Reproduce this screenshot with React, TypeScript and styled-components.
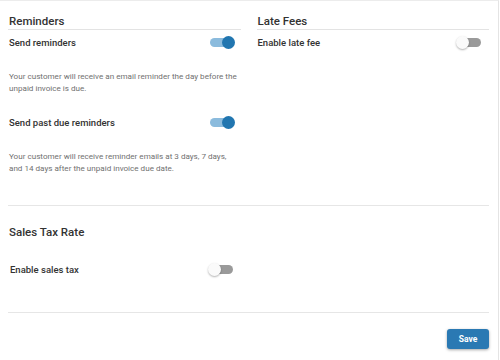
import styled, { createGlobalStyle } from "styled-components";

const GlobalStyle = createGlobalStyle`
  html, body {
    margin: 0;
    padding: 0;
    background: #ffffff;
    font-family: Roboto, "Liberation Sans", sans-serif;
  }
`

type ToggleProps = { on?: boolean }

function Toggle({ on }: ToggleProps) {
  return (
    <StyledToggle>
      <StyledTrack $on={on} />
      <StyledThumb $on={on} />
    </StyledToggle>
  )
}

function SettingRow({ label, on }: { label: string; on?: boolean }) {
  return (
    <StyledRow>
      <StyledLabel>{label}</StyledLabel>
      <Toggle on={on} />
    </StyledRow>
  )
}

function App() {
  return (
    <>
      <GlobalStyle />
      <StyledCard>
        <StyledColumns>
          <StyledColumn>
            <StyledHeading>Reminders</StyledHeading>
            <SettingRow label="Send reminders" on />
            <StyledHint>
              Your customer will receive an email reminder the day before the unpaid invoice is due.
            </StyledHint>
            <SettingRow label="Send past due reminders" on />
            <StyledHint>
              Your customer will receive reminder emails at 3 days, 7 days, and 14 days after the unpaid invoice due date.
            </StyledHint>
          </StyledColumn>
          <StyledColumn>
            <StyledHeading>Late Fees</StyledHeading>
            <SettingRow label="Enable late fee" />
          </StyledColumn>
        </StyledColumns>
        <StyledDivider />
        <StyledSection>
          <StyledSectionTitle>Sales Tax Rate</StyledSectionTitle>
          <StyledHalf>
            <SettingRow label="Enable sales tax" />
          </StyledHalf>
        </StyledSection>
        <StyledDivider />
        <StyledFooter>
          <StyledSaveButton type="button">Save</StyledSaveButton>
        </StyledFooter>
      </StyledCard>
    </>
  )
}

const StyledCard = styled.div`
  width: 499px;
  height: 360px;
  box-sizing: border-box;
  border-top: 1px solid #ececec;
  border-right: 1px solid #e4e4e4;
  padding: 0 9px 0 8px;
`

const StyledColumns = styled.div`
  display: grid;
  grid-template-columns: 1fr 1fr;
  column-gap: 16px;
`

const StyledColumn = styled.div`
  display: flex;
  flex-direction: column;
`

const StyledHeading = styled.div`
  font-size: 11.5px;
  line-height: 16px;
  font-weight: 500;
  color: #333333;
  padding: 12px 0 0 1px;
  border-bottom: 1px solid #e3e3e3;
`

const StyledRow = styled.div`
  display: flex;
  align-items: center;
  justify-content: space-between;
  height: 24px;
  padding-left: 1px;
  padding-right: 6px;
`

const StyledLabel = styled.span`
  font-size: 9.5px;
  font-weight: 500;
  color: #333333;
`

const StyledHint = styled.p`
  margin: 16px 0;
  padding-left: 1px;
  font-size: 8.1px;
  line-height: 12px;
  color: #707070;
`

const StyledToggle = styled.div`
  position: relative;
  width: 27px;
  height: 13px;
`

const StyledTrack = styled.div<{ $on?: boolean }>`
  position: absolute;
  left: 2px;
  right: 2px;
  top: 2px;
  height: 9px;
  border-radius: 5px;
  background: ${({ $on }) => ($on ? "#8bbbdd" : "#9a9a9a")};
`

const StyledThumb = styled.div<{ $on?: boolean }>`
  position: absolute;
  top: 0;
  ${({ $on }) => ($on ? "right: 0;" : "left: 0;")}
  width: 13px;
  height: 13px;
  border-radius: 50%;
  background: ${({ $on }) => ($on ? "#2176b0" : "#fafafa")};
  box-shadow: ${({ $on }) => ($on ? "none" : "0 1px 2px rgba(0, 0, 0, 0.3)")};
`

const StyledDivider = styled.div`
  height: 1px;
  background: #e6e6e6;
  margin-top: 15px;
`

const StyledSection = styled.div`
  padding: 18px 0 16px 1px;
`

const StyledSectionTitle = styled.div`
  font-size: 11.5px;
  line-height: 16px;
  font-weight: 500;
  color: #333333;
  margin-bottom: 17px;
`

const StyledHalf = styled.div`
  width: 232px;
`

const StyledFooter = styled.div`
  display: flex;
  justify-content: flex-end;
  padding-top: 16px;
`

const StyledSaveButton = styled.button`
  width: 42px;
  height: 20px;
  border: none;
  border-radius: 3px;
  background: #2a79b3;
  color: #ffffff;
  font-family: Roboto, "Liberation Sans", sans-serif;
  font-size: 8.5px;
  font-weight: 700;
  box-shadow: 0 1px 3px rgba(0, 0, 0, 0.35);
  padding: 0;
`

export default App;
